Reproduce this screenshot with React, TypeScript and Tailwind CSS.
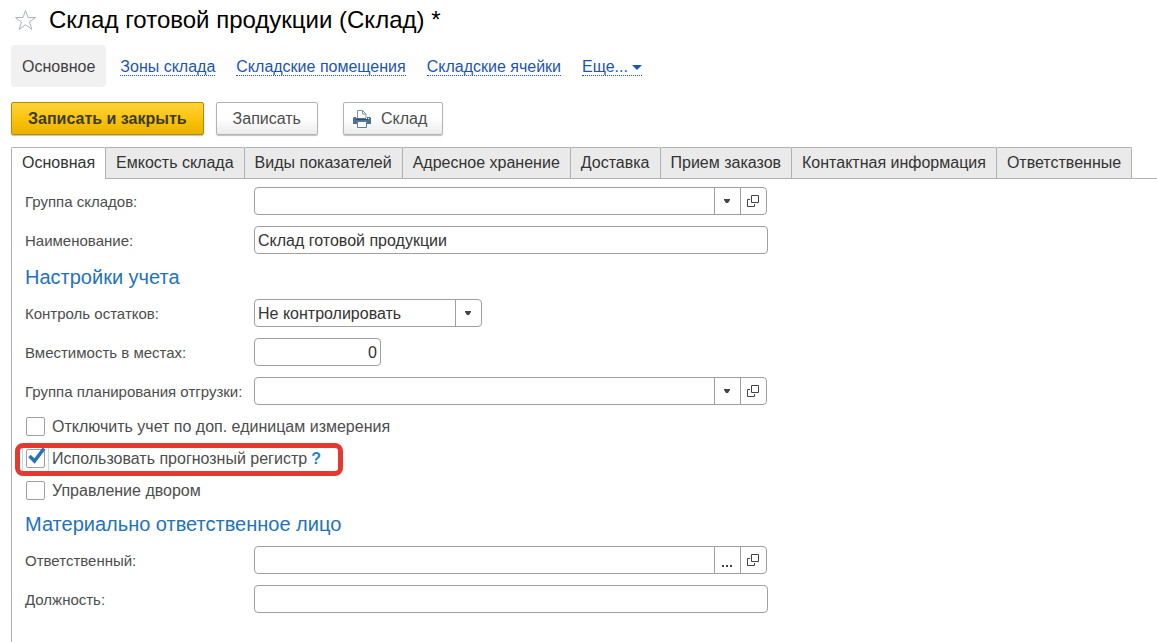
import { useState, type ReactNode } from 'react'

const links = ['Зоны склада', 'Складские помещения', 'Складские ячейки']

const tabs = [
  'Основная',
  'Емкость склада',
  'Виды показателей',
  'Адресное хранение',
  'Доставка',
  'Прием заказов',
  'Контактная информация',
  'Ответственные',
]

const inputClass =
  'block h-7 w-full rounded border border-[#a0a0a0] bg-white px-[3px] pt-px text-[#333] outline-none'

function CaretIcon() {
  return (
    <svg width="7" height="4" viewBox="0 0 7 4" fill="#444" aria-hidden="true">
      <path d="M0 0h6v1L4 4H2L0 1z" />
    </svg>
  )
}

function OpenIcon() {
  return (
    <svg width="13" height="14" viewBox="0 0 13 14" fill="none" stroke="#444" aria-hidden="true">
      <path d="M4.500 1.500h7v7h-7z" />
      <path d="M3 5.500H.5v7h7V10" />
    </svg>
  )
}

function PrinterIcon() {
  return (
    <svg width="18" height="18" viewBox="0 0 18 18" aria-hidden="true">
      <path d="M4.500 8V.5h5l3.500 3.500V8" fill="#fff" stroke="#7f93a8" />
      <path d="M9.500 .5V4H13" fill="none" stroke="#7f93a8" />
      <path d="M1 7h2v1h11V7h3l1 1v6H0V8z" fill="#4d7296" />
      <path d="M3 9.500h12" stroke="#2f4e6d" />
      <path d="M13 8h1v1h-1zM15 8h1v1h-1z" fill="#fff" />
      <path d="M4.500 11.500h9v6h-9z" fill="#fff" stroke="#5f7c99" />
    </svg>
  )
}

function Field({ id, label, children }: { id: string; label: string; children: ReactNode }) {
  return (
    <div className="flex items-center">
      <label htmlFor={id} className="w-[229px] shrink-0 pt-px text-[15px] whitespace-nowrap">
        {label}
      </label>
      {children}
    </div>
  )
}

function LookupInput({ id, more }: { id: string; more?: boolean }) {
  return (
    <div className="flex h-7 w-full max-w-[513px] overflow-hidden rounded border border-[#a0a0a0] bg-white">
      <input id={id} type="text" className="min-w-0 flex-1 px-[3px] pt-px text-[#333] outline-none" />
      <button
        type="button"
        aria-label="Выбрать"
        className="flex w-[26px] items-center justify-center border-l border-[#a0a0a0]"
      >
        {more ? (
          <svg width="11" height="14" viewBox="0 0 11 14" fill="#444" aria-hidden="true">
            <path d="M0 12h2v2H0zM4 12h2v2H4zM8 12h2v2H8z" />
          </svg>
        ) : (
          <CaretIcon />
        )}
      </button>
      <button
        type="button"
        aria-label="Открыть"
        className="flex w-[26px] items-center justify-center border-l border-[#a0a0a0]"
      >
        <OpenIcon />
      </button>
    </div>
  )
}

function Check({ label, initial = false }: { label: string; initial?: boolean }) {
  const [checked, setChecked] = useState(initial)
  return (
    <label className="flex items-start gap-[7px]">
      <span className="relative flex">
        <input
          type="checkbox"
          checked={checked}
          onChange={(e) => setChecked(e.target.checked)}
          className="size-[19px] appearance-none rounded-xs border border-[#a0a0a0] bg-white"
        />
        {checked && (
          <svg
            className="pointer-events-none absolute inset-0 overflow-visible"
            width="19"
            height="19"
            viewBox="0 0 19 19"
            fill="none"
            stroke="#2a71b8"
            aria-hidden="true"
          >
            <path d="M3.500 7l5 5L18 -.5" strokeWidth="3.500" />
          </svg>
        )}
      </span>
      {label}
    </label>
  )
}

export default function App() {
  const [active, setActive] = useState(0)
  return (
    <main className="flex min-h-screen flex-col bg-white font-['Liberation_Sans',Arial,sans-serif] text-base leading-5 text-[#4d4d4d]">
      <header className="flex h-10 items-center gap-3 pl-[14px]">
        <button type="button" aria-label="В избранное">
          <svg width="23" height="22" viewBox="0 0 23 22" fill="none" stroke="#aab2bb" aria-hidden="true">
            <path d="M11.500 1.500l2.500 7h7.500l-6 4.500 2.300 7.300-6.300-4.500-6.300 4.500L7.500 13l-6-4.500H9z" />
          </svg>
        </button>
        <h1 className="text-2xl text-black">Склад готовой продукции (Склад) *</h1>
      </header>

      <nav className="mt-[5px] flex h-[42px] items-center gap-[21px] pl-[11px] text-[#1c55ae]">
        <div className="flex h-full items-center gap-[14px]">
          <a href="#main" className="flex h-full items-center rounded bg-[#f1f1f1] px-[11px] pt-px text-[#404040]">
            Основное
          </a>
          <a href="#zones" className="mt-px border-b border-dotted border-[#1c55ae] pt-0.5 leading-4">
            {links[0]}
          </a>
        </div>
        {links.slice(1).map((l) => (
          <a key={l} href="#section" className="mt-px border-b border-dotted border-[#1c55ae] pt-0.5 leading-4">
            {l}
          </a>
        ))}
        <a
          href="#more"
          className="mt-px flex items-center gap-1 border-b border-dotted border-[#1c55ae] pt-0.5 leading-4"
        >
          Еще...
          <svg width="10" height="5" viewBox="0 0 10 5" fill="#1c55ae" aria-hidden="true">
            <path d="M0 0h10L5 5z" />
          </svg>
        </a>
      </nav>

      <div className="mt-[15px] flex pl-[11px]">
        <button
          type="button"
          className="h-[33px] rounded-xs border border-[#b58c00] bg-linear-to-b from-[#ffd234] via-[#fbc40a] to-[#eab200] px-4 font-bold text-[#3b3b2f] shadow-[0_1px_1px_#00000040]"
        >
          Записать и закрыть
        </button>
        <button
          type="button"
          className="ml-3 h-[33px] rounded-xs border border-[#b3b3b3] bg-linear-to-b from-white from-50% to-[#ebebeb] px-4 shadow-[0_1px_1px_#00000040]"
        >
          Записать
        </button>
        <button
          type="button"
          className="ml-[25px] flex h-[33px] items-center gap-[10px] rounded-xs border border-[#b3b3b3] bg-linear-to-b from-white from-50% to-[#ebebeb] pr-[15px] pl-[9px] shadow-[0_1px_1px_#00000040]"
        >
          <PrinterIcon />
          Склад
        </button>
      </div>

      <div role="tablist" className="mt-3 ml-[11px] flex h-8 border-b border-[#b0b0b0]">
        {tabs.map((t, i) => (
          <button
            key={t}
            type="button"
            role="tab"
            aria-selected={i === active}
            onClick={() => setActive(i)}
            className={
              i === active
                ? '-mb-px rounded-t-xs border border-b-0 border-[#b0b0b0] bg-white px-[10px] pb-px whitespace-nowrap text-[#333]'
                : '-ml-px rounded-t-xs border border-b-0 border-[#b0b0b0] bg-[#eaeaea] px-[10px] whitespace-nowrap text-[#333] first:ml-0'
            }
          >
            {t}
          </button>
        ))}
      </div>

      <section role="tabpanel" className="ml-[11px] flex-1 border-l border-[#b0b0b0] pt-2 pl-[13px]">
        <div className="flex flex-col gap-[11px]">
          <Field id="group" label="Группа складов:">
            <LookupInput id="group" />
          </Field>
          <Field id="name" label="Наименование:">
            <div className="w-full max-w-[514px]">
              <input id="name" type="text" defaultValue="Склад готовой продукции" className={inputClass} />
            </div>
          </Field>
        </div>

        <h2 className="pt-[11px] pb-[10px] text-xl leading-6 text-[#2272bd]">Настройки учета</h2>

        <div className="flex flex-col gap-[11px]">
          <Field id="control" label="Контроль остатков:">
            <div className="relative w-[228px]">
              <select id="control" className={`${inputClass} appearance-none`}>
                <option>Не контролировать</option>
              </select>
              <span className="pointer-events-none absolute inset-y-0 right-0 flex w-[27px] items-center justify-center border-l border-[#a0a0a0] pr-px">
                <CaretIcon />
              </span>
            </div>
          </Field>
          <Field id="capacity" label="Вместимость в местах:">
            <div className="w-[127px]">
              <input id="capacity" type="text" defaultValue="0" className={`${inputClass} text-right`} />
            </div>
          </Field>
          <Field id="shipping" label="Группа планирования отгрузки:">
            <LookupInput id="shipping" />
          </Field>
        </div>

        <div className="mt-3 ml-px flex flex-col items-start gap-3">
          <Check label="Отключить учет по доп. единицам измерения" />
          <div className="relative flex items-center gap-1">
            <Check label="Использовать прогнозный регистр" initial />
            <button type="button" aria-label="Справка" className="font-bold text-[#1f86c8]">
              ?
            </button>
            <span className="pointer-events-none absolute -inset-y-1 -left-1 w-[27px] border-x border-[#b9dcf5]" />
            <span className="pointer-events-none absolute -top-[6px] -right-[22px] -bottom-[7px] -left-[11px] rounded-lg border-5 border-[#e33a30]" />
          </div>
          <Check label="Управление двором" />
        </div>

        <h2 className="pt-[11px] pb-[10px] text-xl leading-6 text-[#2272bd]">Материально ответственное лицо</h2>

        <div className="flex flex-col gap-[11px] pb-6">
          <Field id="person" label="Ответственный:">
            <LookupInput id="person" more />
          </Field>
          <Field id="position" label="Должность:">
            <div className="w-full max-w-[514px]">
              <input id="position" type="text" className={inputClass} />
            </div>
          </Field>
        </div>
      </section>
    </main>
  )
}
